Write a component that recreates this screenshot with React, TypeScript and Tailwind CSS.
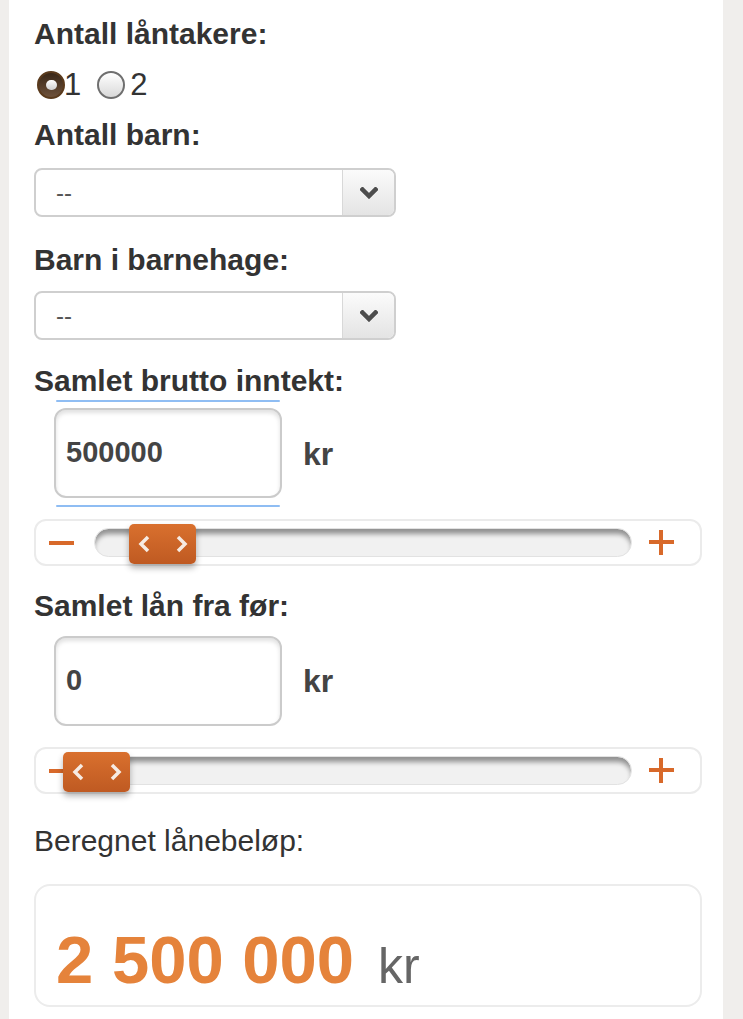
import React from 'react';

const font = "font-['Liberation_Sans',Arial,Helvetica,sans-serif]";

const Heading = ({ children, className = '' }: { children: React.ReactNode; className?: string }) => (
  <h3 className={`text-[30px] leading-[34px] font-bold text-[#333] ${className}`}>{children}</h3>
);

const Chevron = () => (
  <svg width="18" height="12" viewBox="0 0 18 12">
    <path d="M2.5 2.5 L9 9 L15.5 2.5" fill="none" stroke="#4d4d4d" strokeWidth="4.5" strokeLinecap="square" />
  </svg>
);

const Select = ({ className = '' }: { className?: string }) => (
  <div className={`flex h-[49px] w-[362px] rounded-[8px] border-2 border-[#cfcfcf] bg-white overflow-hidden ${className}`}>
    <div className="flex-1 flex items-center pl-[20px] text-[24px] text-[#555]">--</div>
    <div className="w-[52px] flex items-center justify-center border-l border-[#d8d8d8] bg-gradient-to-b from-[#fbfbfb] to-[#e4e4e4]">
      <Chevron />
    </div>
  </div>
);

const AmountInput = ({ value }: { value: string }) => (
  <div className="h-[90px] w-[228px] rounded-[12px] border-2 border-[#cbcbcb] bg-white shadow-[inset_0_3px_4px_rgba(0,0,0,0.12)] flex items-center pl-[10px] text-[29px] font-bold text-[#444]">
    {value}
  </div>
);

const HandleArrows = () => (
  <svg width="52" height="18" viewBox="0 0 52 18">
    <path d="M11 2 L4 9 L11 16" fill="none" stroke="#f6ebe3" strokeWidth="3.5" />
    <path d="M41 2 L48 9 L41 16" fill="none" stroke="#f6ebe3" strokeWidth="3.5" />
  </svg>
);

const Slider = ({ handleLeft, className = '' }: { handleLeft: string; className?: string }) => (
  <div className={`relative flex items-center h-[47px] rounded-[12px] border-2 border-[#ebebeb] bg-white ${className}`}>
    <div className="ml-[13px] w-[25px] h-[4px] bg-[#d8692a]" />
    <div className="ml-[20px] w-[538px] h-[29px] rounded-full border border-[#e2e2e2] bg-[#f1f1f1] shadow-[inset_0_6px_5px_-1px_rgba(0,0,0,0.4)]" />
    <div className="ml-[17px] relative w-[25px] h-[25px]">
      <div className="absolute left-0 top-[10px] w-[25px] h-[4px] bg-[#d8692a]" />
      <div className="absolute left-[10px] top-0 w-[4px] h-[25px] bg-[#d8692a]" />
    </div>
    <div
      className={`absolute top-[3px] ${handleLeft} w-[67px] h-[40px] rounded-[5px] bg-gradient-to-b from-[#d9702e] to-[#bf5a22] shadow-[0_4px_6px_rgba(0,0,0,0.3)] flex items-center justify-center`}
    >
      <HandleArrows />
    </div>
  </div>
);

export default function App() {
  return (
    <div className={`min-h-[1019px] bg-[#f0eeec] ${font}`}>
      <div className="ml-[9px] w-[714px] min-h-[1019px] bg-white pl-[25px] pr-[21px] pt-[17px] pb-[20px]">
        <Heading>Antall låntakere:</Heading>

        <div className="mt-[16px] h-[36px] flex items-center text-[31px] text-[#333]">
          <span className="ml-[3px] w-[28px] h-[28px] rounded-full border-2 border-[#5a3a1c] bg-gradient-to-b from-[#3a2818] to-[#6e513a] flex items-center justify-center">
            <span className="w-[11px] h-[10px] rounded-full bg-gradient-to-b from-white to-[#cfcfcf]" />
          </span>
          <span className="-ml-[1px]">1</span>
          <span className="ml-[16px] w-[28px] h-[28px] rounded-full border-2 border-[#6f6f6f] bg-gradient-to-b from-white to-[#d9d9d9]" />
          <span className="ml-[5px]">2</span>
        </div>

        <Heading className="mt-[15px]">Antall barn:</Heading>
        <Select className="mt-[16px]" />

        <Heading className="mt-[26px]">Barn i barnehage:</Heading>
        <Select className="mt-[14px]" />

        <Heading className="mt-[24px]">Samlet brutto inntekt:</Heading>
        <div className="mt-[2px] flex items-center">
          <div className="ml-[20px] w-[228px] flex flex-col">
            <div className="h-[2px] mx-[2px] rounded-full bg-[#8fbdf3]" />
            <div className="mt-[6px]">
              <AmountInput value="500000" />
            </div>
            <div className="mt-[7px] h-[2px] mx-[2px] rounded-full bg-[#8fbdf3]" />
          </div>
          <span className="ml-[21px] text-[32px] font-bold text-[#444]">kr</span>
        </div>
        <Slider handleLeft="left-[93px]" className="mt-[12px]" />

        <Heading className="mt-[23px]">Samlet lån fra før:</Heading>
        <div className="mt-[13px] flex items-center">
          <div className="ml-[20px]">
            <AmountInput value="0" />
          </div>
          <span className="ml-[21px] text-[32px] font-bold text-[#444]">kr</span>
        </div>
        <Slider handleLeft="left-[27px]" className="mt-[21px]" />

        <p className="mt-[30px] text-[30px] leading-[34px] text-[#333]">Beregnet lånebeløp:</p>

        <div className="mt-[26px] h-[123px] rounded-[16px] border-2 border-[#ececec] bg-white pl-[20px] pt-[40px]">
          <div className="flex items-baseline leading-none">
            <span className="text-[67px] font-bold text-[#e5833b]">2 500 000</span>
            <span className="ml-[24px] text-[50px] text-[#666]">kr</span>
          </div>
        </div>
      </div>
    </div>
  );
}
